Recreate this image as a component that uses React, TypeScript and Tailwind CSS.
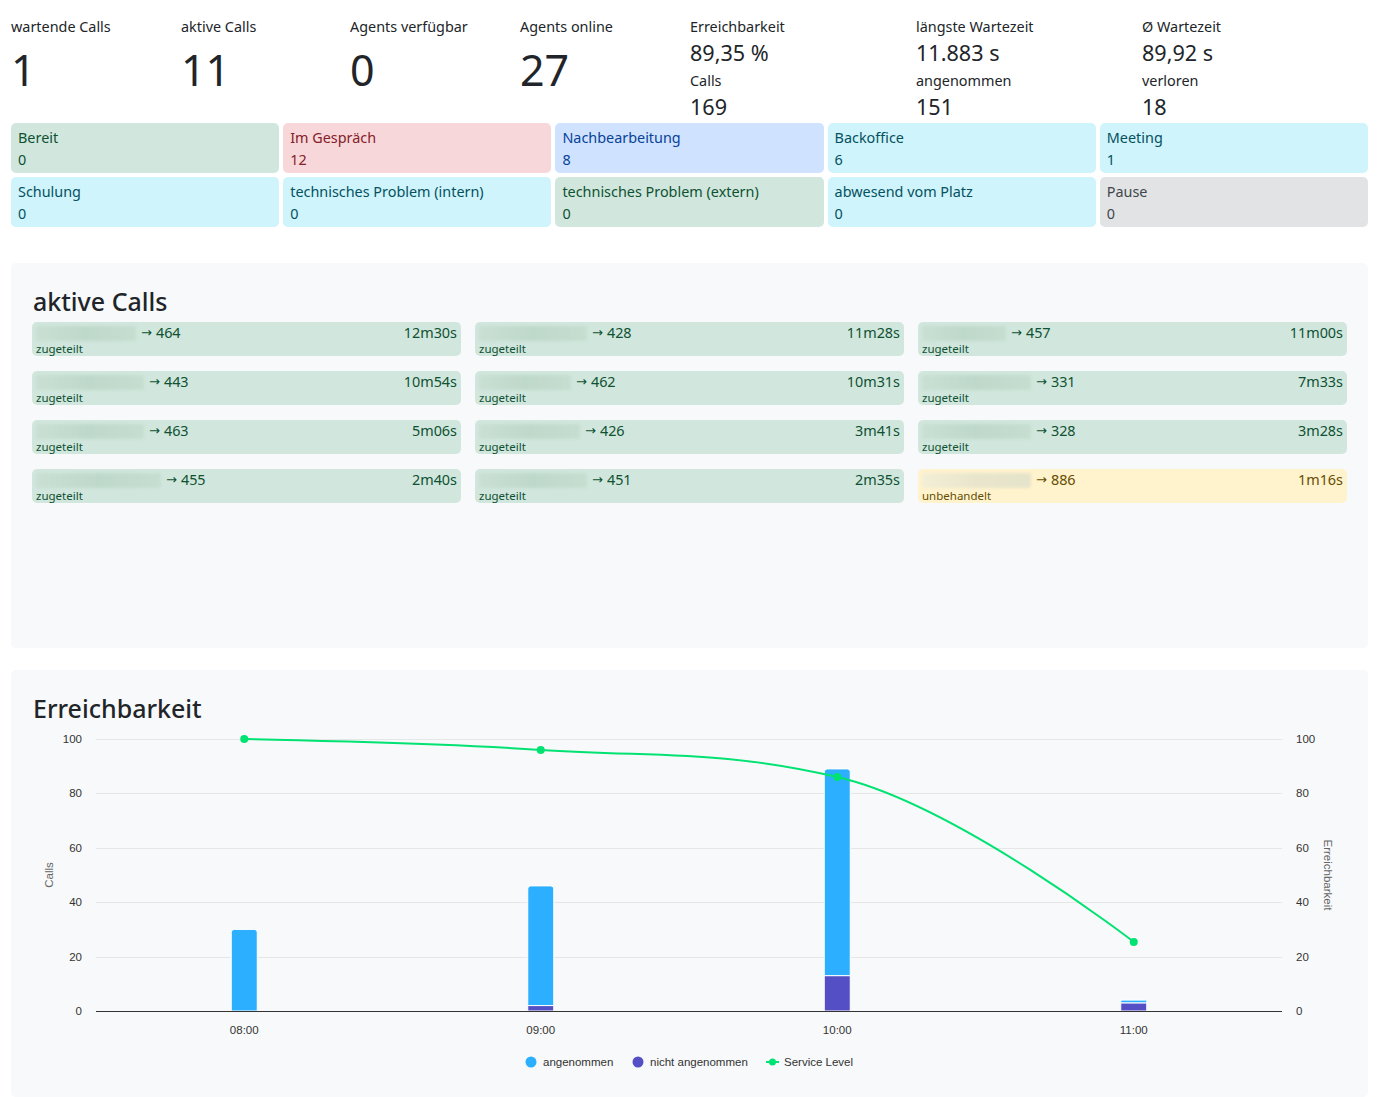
import React from "react";

type Tile = { label: string; value: string; cls: string };

const tiles: Tile[] = [
  { label: "Bereit", value: "0", cls: "bg-[#d1e7dd] text-[#0f5132]" },
  { label: "Im Gespräch", value: "12", cls: "bg-[#f8d7da] text-[#842029]" },
  { label: "Nachbearbeitung", value: "8", cls: "bg-[#cfe2ff] text-[#084298]" },
  { label: "Backoffice", value: "6", cls: "bg-[#cff4fc] text-[#055160]" },
  { label: "Meeting", value: "1", cls: "bg-[#cff4fc] text-[#055160]" },
  { label: "Schulung", value: "0", cls: "bg-[#cff4fc] text-[#055160]" },
  { label: "technisches Problem (intern)", value: "0", cls: "bg-[#cff4fc] text-[#055160]" },
  { label: "technisches Problem (extern)", value: "0", cls: "bg-[#d1e7dd] text-[#0f5132]" },
  { label: "abwesend vom Platz", value: "0", cls: "bg-[#cff4fc] text-[#055160]" },
  { label: "Pause", value: "0", cls: "bg-[#e2e3e5] text-[#41464b]" },
];

type Call = { ext: string; dur: string; blur: number; pending?: boolean };

const calls: Call[] = [
  { ext: "464", dur: "12m30s", blur: 100 },
  { ext: "428", dur: "11m28s", blur: 108 },
  { ext: "457", dur: "11m00s", blur: 84 },
  { ext: "443", dur: "10m54s", blur: 108 },
  { ext: "462", dur: "10m31s", blur: 92 },
  { ext: "331", dur: "7m33s", blur: 109 },
  { ext: "463", dur: "5m06s", blur: 108 },
  { ext: "426", dur: "3m41s", blur: 101 },
  { ext: "328", dur: "3m28s", blur: 109 },
  { ext: "455", dur: "2m40s", blur: 125 },
  { ext: "451", dur: "2m35s", blur: 108 },
  { ext: "886", dur: "1m16s", blur: 109, pending: true },
];

function CallCard({ c }: { c: Call }) {
  const pending = !!c.pending;
  return (
    <div
      className={
        "flex h-[34px] flex-col rounded-[5px] px-[4px] pt-[2px] " +
        (pending ? "bg-[#fff3cd] text-[#664d03]" : "bg-[#d1e7dd] text-[#0f5132]")
      }
    >
      <div className="flex h-[18px] items-center justify-between text-[14.4px] leading-[18px]">
        <div className="flex items-center">
          <div
            className={
              "h-[15px] rounded-[2px] blur-[1.5px] " +
              (pending
                ? "bg-gradient-to-r from-[#f3eed6] via-[#e9e5cc] to-[#e6e3cc]"
                : "bg-gradient-to-r from-[#c9dfd3] via-[#bed8ca] to-[#c6ddd0]")
            }
            style={{ width: c.blur }}
          />
          <span className="ml-[5px] font-['DejaVu_Sans',sans-serif] text-[13px] leading-[18px]">→</span>
          <span className="ml-[4px]">{c.ext}</span>
        </div>
        <span>{c.dur}</span>
      </div>
      <div className="text-[11.5px] leading-[13px]">{pending ? "unbehandelt" : "zugeteilt"}</div>
    </div>
  );
}

type Pt = { x: number; y: number };

function splinePath(pts: Pt[]): string {
  const smoothing = 1.5;
  const denom = smoothing + 1;
  const ctrl: { lx: number; ly: number; rx: number; ry: number }[] = pts.map((p) => ({
    lx: p.x,
    ly: p.y,
    rx: p.x,
    ry: p.y,
  }));
  for (let i = 1; i < pts.length - 1; i++) {
    const last = pts[i - 1];
    const next = pts[i + 1];
    const p = pts[i];
    const lx = (smoothing * p.x + last.x) / denom;
    let ly = (smoothing * p.y + last.y) / denom;
    const rx = (smoothing * p.x + next.x) / denom;
    let ry = (smoothing * p.y + next.y) / denom;
    let correction = 0;
    if (rx !== lx) correction = ((ry - ly) * (rx - p.x)) / (rx - lx) + p.y - ry;
    ly += correction;
    ry += correction;
    if (ly > last.y && ly > p.y) {
      ly = Math.max(last.y, p.y);
      ry = 2 * p.y - ly;
    } else if (ly < last.y && ly < p.y) {
      ly = Math.min(last.y, p.y);
      ry = 2 * p.y - ly;
    }
    if (ry > next.y && ry > p.y) {
      ry = Math.max(next.y, p.y);
      ly = 2 * p.y - ry;
    } else if (ry < next.y && ry < p.y) {
      ry = Math.min(next.y, p.y);
      ly = 2 * p.y - ry;
    }
    ctrl[i] = { lx, ly, rx, ry };
  }
  let d = `M ${pts[0].x} ${pts[0].y}`;
  for (let i = 1; i < pts.length; i++) {
    d += ` C ${ctrl[i - 1].rx} ${ctrl[i - 1].ry} ${ctrl[i].lx} ${ctrl[i].ly} ${pts[i].x} ${pts[i].y}`;
  }
  return d;
}

function Chart() {
  const left = 85;
  const right = 1271;
  const y0 = 286;
  const k = 2.72;
  const cw = (right - left) / 4;
  const centers = [0, 1, 2, 3].map((i) => left + cw * i + cw / 2);
  const labels = ["08:00", "09:00", "10:00", "11:00"];
  const ang = [30, 44, 76, 1];
  const nicht = [0, 2, 13, 3];
  const sl = [100, 96, 86, 25.4];
  const ticks = [0, 20, 40, 60, 80, 100];
  const Y = (v: number) => y0 - v * k;
  const pts = centers.map((x, i) => ({ x, y: Y(sl[i]) }));
  const bw = 26;

  const topRounded = (x: number, yTop: number, yBot: number, r: number) => {
    const h = yBot - yTop;
    const rr = Math.min(r, h / 2, bw / 2);
    return `M ${x} ${yBot} L ${x} ${yTop + rr} Q ${x} ${yTop} ${x + rr} ${yTop} L ${x + bw - rr} ${yTop} Q ${x + bw} ${yTop} ${x + bw} ${yTop + rr} L ${x + bw} ${yBot} Z`;
  };

  return (
    <svg width={1357} height={372} className="block" style={{ fontFamily: "'Liberation Sans', Arial, sans-serif" }}>
      {ticks.map((t) =>
        t === 0 ? null : (
          <line key={t} x1={left} x2={right} y1={Math.round(Y(t)) + 0.5} y2={Math.round(Y(t)) + 0.5} stroke="#e6e6e6" strokeWidth={1} />
        )
      )}
      {ticks.map((t) => (
        <text key={"l" + t} x={71} y={Y(t) + 4} textAnchor="end" fontSize={11.5} fill="#333333">
          {t}
        </text>
      ))}
      {ticks.map((t) => (
        <text key={"r" + t} x={1285} y={Y(t) + 4} textAnchor="start" fontSize={11.5} fill="#333333">
          {t}
        </text>
      ))}
      <text x={42} y={150} textAnchor="middle" fontSize={11.5} fill="#666666" transform="rotate(-90 42 150)">
        Calls
      </text>
      <text x={1313} y={150} textAnchor="middle" fontSize={11.5} fill="#666666" transform="rotate(90 1313 150)">
        Erreichbarkeit
      </text>
      {centers.map((cx, i) => {
        const x = cx - bw / 2;
        const total = ang[i] + nicht[i];
        const yTotal = Y(total);
        const yN = Y(nicht[i]);
        return (
          <g key={i}>
            {nicht[i] > 0 && (
              <path
                d={topRounded(x, yN, y0, ang[i] > 0 ? 0 : 3)}
                fill="#544fc5"
                stroke="#ffffff"
                strokeWidth={1}
              />
            )}
            {ang[i] > 0 && (
              <path d={topRounded(x, yTotal, yN, 3)} fill="#2caffe" stroke="#ffffff" strokeWidth={1} />
            )}
          </g>
        );
      })}
      <line x1={left} x2={right} y1={y0 + 0.5} y2={y0 + 0.5} stroke="#333333" strokeWidth={1} />
      {centers.map((cx, i) => (
        <text key={"x" + i} x={cx} y={309} textAnchor="middle" fontSize={11.5} fill="#333333">
          {labels[i]}
        </text>
      ))}
      <path d={splinePath(pts)} fill="none" stroke="#00e272" strokeWidth={2} />
      {pts.map((p, i) => (
        <circle key={"m" + i} cx={p.x} cy={p.y} r={4} fill="#00e272" />
      ))}
      <g>
        <circle cx={520} cy={337} r={5.5} fill="#2caffe" />
        <text x={532} y={341} fontSize={11.5} fill="#333333">
          angenommen
        </text>
        <circle cx={627} cy={337} r={5.5} fill="#544fc5" />
        <text x={639} y={341} fontSize={11.5} fill="#333333">
          nicht angenommen
        </text>
        <line x1={755} x2={768} y1={337} y2={337} stroke="#00e272" strokeWidth={2} />
        <circle cx={761.5} cy={337} r={3.5} fill="#00e272" />
        <text x={773} y={341} fontSize={11.5} fill="#333333">
          Service Level
        </text>
      </g>
    </svg>
  );
}

export default function App() {
  const leftStats = [
    { label: "wartende Calls", value: "1" },
    { label: "aktive Calls", value: "11" },
    { label: "Agents verfügbar", value: "0" },
    { label: "Agents online", value: "27" },
  ];
  const rightStats = [
    { l1: "Erreichbarkeit", v1: "89,35 %", l2: "Calls", v2: "169" },
    { l1: "längste Wartezeit", v1: "11.883 s", l2: "angenommen", v2: "151" },
    { l1: "Ø Wartezeit", v1: "89,92 s", l2: "verloren", v2: "18" },
  ];

  return (
    <div className="min-h-screen bg-white pl-[11px] pr-[9px] pt-[16px] font-['Noto_Sans',sans-serif] text-[14.4px] text-[#212529]">
      <div className="grid grid-cols-[170px_169px_170px_170px_226px_226px_1fr] items-start">
        {leftStats.map((s) => (
          <div key={s.label}>
            <div className="leading-[22px]">{s.label}</div>
            <div className="mt-[6px] text-[43px] leading-[1.2]">{s.value}</div>
          </div>
        ))}
        {rightStats.map((s) => (
          <div key={s.l1}>
            <div className="mb-[2px] leading-[22px]">{s.l1}</div>
            <div className="mb-[4px] mt-[1px] text-[21.6px] leading-[26px]">{s.v1}</div>
            <div className="mb-[2px] leading-[22px]">{s.l2}</div>
            <div className="text-[21.6px] leading-[26px]">{s.v2}</div>
          </div>
        ))}
      </div>

      <div className="mt-[3px] grid grid-cols-5 gap-x-[4px] gap-y-[4px]">
        {tiles.map((t) => (
          <div key={t.label} className={"h-[50px] rounded-[5px] px-[7px] pt-[4px] " + t.cls}>
            <div className="leading-[21.6px]">{t.label}</div>
            <div className="leading-[21.6px]">{t.value}</div>
          </div>
        ))}
      </div>

      <div className="mt-[36px] h-[385px] rounded-[5px] bg-[#f8f9fa] px-[21px] pt-[21px]">
        <h3 className="pl-[1px] text-[25px] font-medium leading-[34px]">aktive Calls</h3>
        <div className="mt-[4px] grid grid-cols-3 gap-x-[14px] gap-y-[15px]">
          {calls.map((c) => (
            <CallCard key={c.ext} c={c} />
          ))}
        </div>
      </div>

      <div className="mt-[22px] rounded-[5px] bg-[#f8f9fa] pt-[21px]">
        <h3 className="px-[22px] text-[25px] font-medium leading-[34px]">Erreichbarkeit</h3>
        <Chart />
      </div>
    </div>
  );
}
